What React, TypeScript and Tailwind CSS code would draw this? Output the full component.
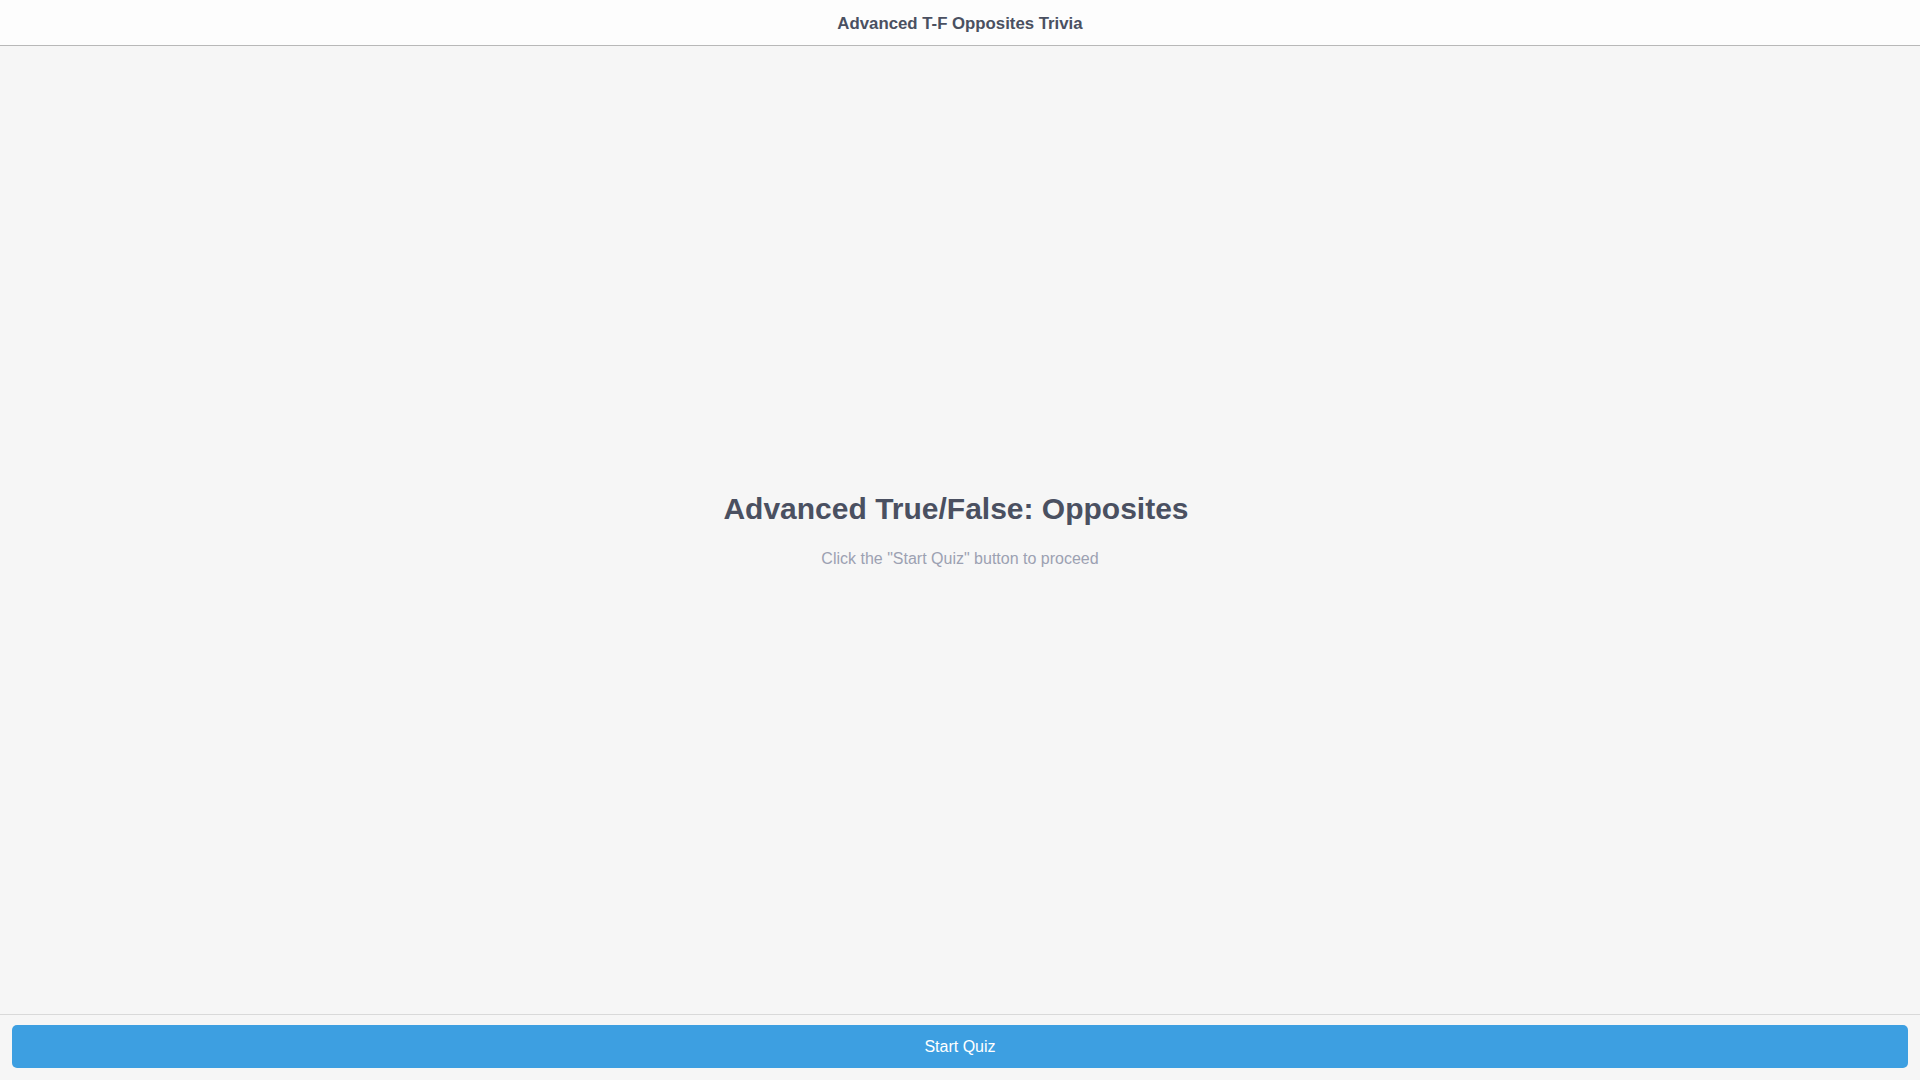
export default function App() {
  return (
    <div className="flex h-screen flex-col bg-[#f6f6f6] font-['Liberation_Sans',Arial,sans-serif]">
      <header className="flex h-[46px] shrink-0 items-center justify-center border-b border-[#b8b8b8] bg-[#fdfdfd] pt-[2px]">
        <h1 className="text-[16.8px] font-bold text-[#4a5061]">Advanced T-F Opposites Trivia</h1>
      </header>
      <main className="flex flex-1 flex-col items-center justify-center pt-[2px]">
        <h2 className="pr-[8px] text-[30px] font-bold leading-[36px] text-[#4a5061]">Advanced True/False: Opposites</h2>
        <p className="mt-[20px] text-[16px] text-[#9ca1b2]">Click the "Start Quiz" button to proceed</p>
      </main>
      <footer className="shrink-0 border-t border-[#d9d9d9] px-[12px] pt-[10px] pb-[12px]">
        <button className="h-[43px] w-full rounded-[5px] bg-[#3d9fe1] text-[16px] text-white">Start Quiz</button>
      </footer>
    </div>
  );
}
